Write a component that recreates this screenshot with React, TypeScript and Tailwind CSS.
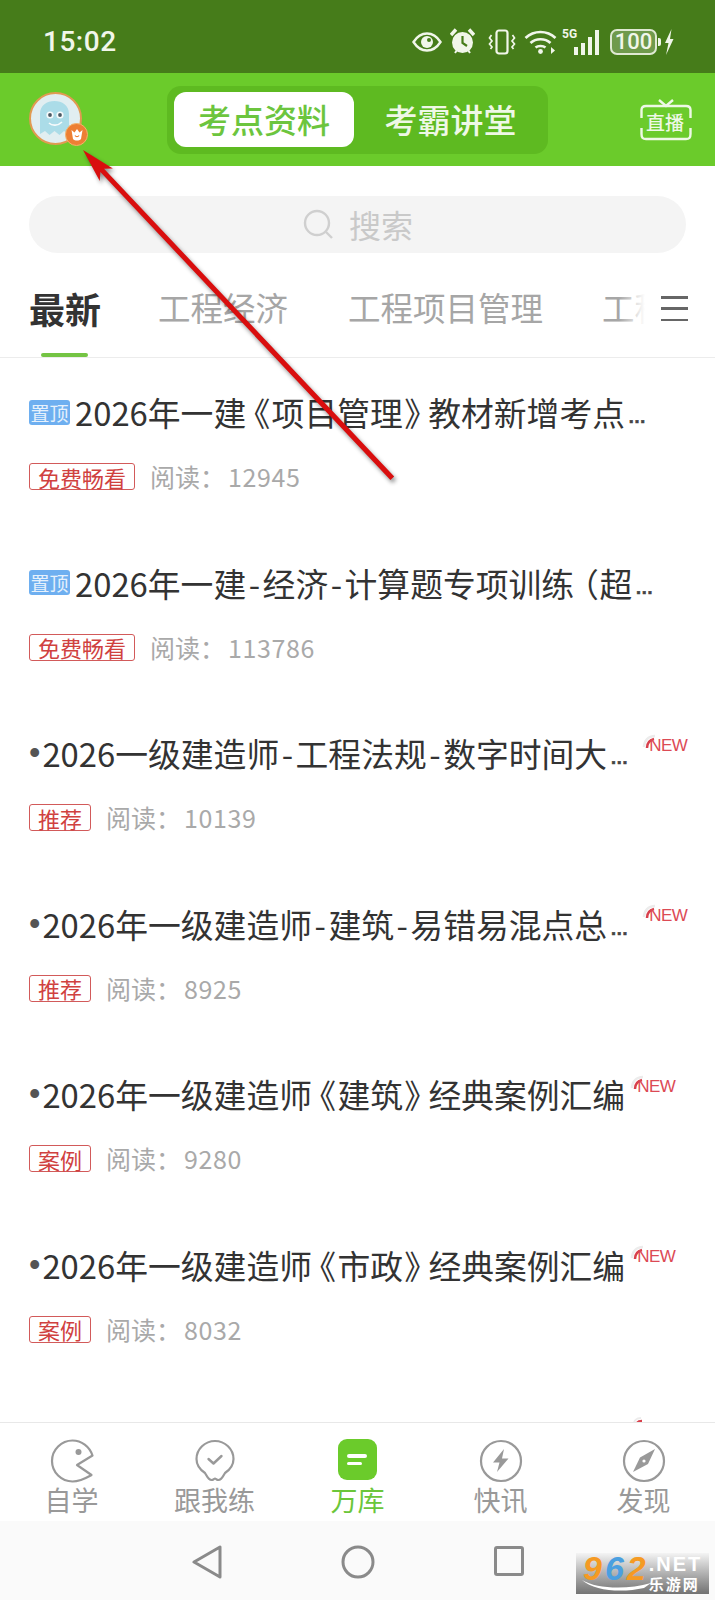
import React from "react";

type Item = { title: string; bullet?: boolean; ell?: boolean; pin?: boolean; tag: string; read: string; isNew?: boolean };

const items: Item[] = [
  { title: "2026年一建《项目管理》教材新增考点", ell: true, pin: true, tag: "免费畅看", read: "12945" },
  { title: "2026年一建-经济-计算题专项训练（超", ell: true, pin: true, tag: "免费畅看", read: "113786" },
  { title: "2026一级建造师-工程法规-数字时间大", bullet: true, ell: true, tag: "推荐", read: "10139", isNew: true },
  { title: "2026年一级建造师-建筑-易错易混点总", bullet: true, ell: true, tag: "推荐", read: "8925", isNew: true },
  { title: "2026年一级建造师《建筑》经典案例汇编", bullet: true, tag: "案例", read: "9280", isNew: true },
  { title: "2026年一级建造师《市政》经典案例汇编", bullet: true, tag: "案例", read: "8032", isNew: true },
];

function Title({ text }: { text: string }) {
  const parts = text.split(/([-《》（])/);
  return (
    <span className="whitespace-nowrap text-[32.8px] leading-[44px] text-[#333333] [font-feature-settings:'palt']">
      {parts.map((p, i) => {
        if (p === "-") return <span key={i} className="mx-[2.5px]">{p}</span>;
        if (p === "《" || p === "（") return <span key={i} className="ml-[7px] mr-[2px]">{p}</span>;
        if (p === "》") return <span key={i} className="ml-[2px] mr-[7px]">{p}</span>;
        return <span key={i}>{p}</span>;
      })}
    </span>
  );
}

function NewMark() {
  return (
    <div className="relative ml-[5px] mt-[-11px] h-[30px] w-[48px] shrink-0">
      <svg className="absolute left-0 top-0" width="16" height="20" viewBox="0 0 16 20" fill="none">
        <path d="M2 14 C2 8 6 3 13 3" stroke="#ececec" strokeWidth="2.5" />
        <path d="M5 15 C5 10 8 7 12 6" stroke="#d8404c" strokeWidth="2.5" />
      </svg>
      <span className="absolute left-[7px] top-[1px] font-['Liberation_Sans',sans-serif] text-[17px] leading-[24px] tracking-[-0.5px] text-[#dc4a55]">NEW</span>
    </div>
  );
}

function Row({ item }: { item: Item }) {
  return (
    <div className="h-[170.6px] shrink-0 pl-[29px] pt-[32px]">
      <div className="flex h-[44px] items-center">
        {item.pin && (
          <span className="mr-[5px] flex h-[25px] w-[41px] shrink-0 items-center justify-center rounded-[3px] bg-[#6eaff0] text-[19px] leading-none text-[#e6f1fc]">
            置顶
          </span>
        )}
        {item.bullet && <span className="mr-[2px] font-['Liberation_Sans',sans-serif] text-[32.5px] leading-[44px] text-[#555555]">•</span>}
        <Title text={item.title} />
        {item.ell && (
          <span className={(item.isNew ? "mr-[9px] " : "") + "ml-[3px] translate-y-[5px] font-['Liberation_Sans',sans-serif] text-[18px] font-bold leading-[44px] text-[#444444] [-webkit-text-stroke:0.6px_#444444]"}>…</span>
        )}
        {item.isNew && <NewMark />}
      </div>
      <div className="mt-[29px] flex h-[27px] items-center gap-[15px]">
        <span className="flex h-[27px] items-center rounded-[3px] border border-[#d25a5a] px-[8px] text-[22px] leading-none text-[#d0413f]">
          {item.tag}
        </span>
        <span className="flex items-center text-[25px] leading-none text-[#a9a9a9]">
          阅读：<span className="ml-[3px] tracking-[0.6px]">{item.read}</span>
        </span>
      </div>
    </div>
  );
}

const NavLabel = ({ children, active }: { children: React.ReactNode; active?: boolean }) => (
  <span className={active ? "text-[27px] leading-[34px] text-[#6bc63a]" : "text-[27px] leading-[34px] text-[#999999]"}>{children}</span>
);

export default function App() {
  return (
    <div className="relative flex h-[1600px] w-[715px] flex-col overflow-hidden bg-white font-['Noto_Sans_CJK_SC','Noto_Sans',sans-serif]">
      {/* status bar */}
      <div className="flex h-[73px] shrink-0 items-center justify-between bg-[#467c1a] pl-[43px] pr-[41px] pt-[10px] text-[#f1f6ea]">
        <span className="font-['Roboto',sans-serif] text-[28px] font-medium leading-none tracking-[0.5px]">15:02</span>
        <div className="flex items-center">
          <svg width="30" height="20" viewBox="0 0 30 20" fill="none" className="mr-[8px]">
            <path d="M1.5 10 C6 3 10 1.5 15 1.5 S24 3 28.5 10 C24 17 20 18.5 15 18.5 S6 17 1.5 10Z" stroke="currentColor" strokeWidth="2.4" />
            <circle cx="15" cy="10" r="6" fill="currentColor" />
            <circle cx="17" cy="8" r="2" fill="#467c1a" />
          </svg>
          <svg width="25" height="27" viewBox="0 0 25 27" className="mr-[13px]">
            <circle cx="12.5" cy="14.5" r="10.5" fill="currentColor" />
            <path d="M12.5 8 V15 L17 18" stroke="#467c1a" strokeWidth="2.2" fill="none" />
            <path d="M1 7 L6 1.5 M24 7 L19 1.5" stroke="currentColor" strokeWidth="3.4" />
            <path d="M5 25 L7 22 M20 25 L18 22" stroke="currentColor" strokeWidth="2" />
          </svg>
          <svg width="28" height="26" viewBox="0 0 28 26" fill="none" stroke="currentColor" className="mr-[8px]">
            <rect x="8.5" y="1.5" width="11" height="23" rx="2.5" strokeWidth="2.2" />
            <path d="M3.5 6 L1.5 9 L4 12 L1.5 15 L4 18 L2.5 20" strokeWidth="1.7" />
            <path d="M24.5 6 L26.5 9 L24 12 L26.5 15 L24 18 L25.5 20" strokeWidth="1.7" />
          </svg>
          <svg width="33" height="26" viewBox="0 0 33 26" fill="none" stroke="currentColor" strokeWidth="2.7" className="mr-[5px]">
            <path d="M1.5 9 C10 1 23 1 31.5 9" />
            <path d="M6.5 14 C12 9 21 9 26.5 14" />
            <path d="M11.5 18.5 C14 16.5 19 16.5 21.5 18.5" />
            <circle cx="16.5" cy="22.5" r="2.4" fill="currentColor" stroke="none" />
            <path d="M27 18 L31 21.5 L27 25 Z" fill="currentColor" stroke="none" />
          </svg>
          <div className="relative mr-[11px] h-[26px] w-[37px]">
            <span className="absolute left-0 top-[-2px] font-['Roboto',sans-serif] text-[12px] font-bold leading-[14px]">5G</span>
            <div className="absolute bottom-0 right-0 flex items-end gap-[3px]">
              <div className="h-[8px] w-[4px] bg-current" />
              <div className="h-[12px] w-[4px] bg-current" />
              <div className="h-[18px] w-[4px] bg-current" />
              <div className="h-[25px] w-[4px] bg-current" />
            </div>
          </div>
          <div className="mr-[1px] flex h-[26px] w-[47px] items-center justify-center rounded-[7px] border-2 border-[#dfe9d2] bg-[#6f9a4c]">
            <span className="font-['Roboto',sans-serif] text-[22px] font-medium leading-none">100</span>
          </div>
          <div className="mr-[3px] h-[8px] w-[3px] rounded-r-[2px] bg-current" />
          <svg width="10" height="26" viewBox="0 0 10 26">
            <path d="M7.5 0 L1 14 H4.5 L2 26 L9.5 10 H6 Z" fill="currentColor" />
          </svg>
        </div>
      </div>

      {/* header */}
      <div className="flex h-[93px] shrink-0 items-center bg-[#6bcb2b] pl-[29px] pr-[23px]">
        <div className="relative h-[53px] w-[53px] shrink-0 -translate-y-[1px] rounded-full border-2 border-[#e19a52] bg-[#e1eef1]">
          <svg width="49" height="49" viewBox="0 0 49 49" className="absolute left-0 top-0">
            <path d="M9 40 V20 C9 11 16 7 23.5 7 S38 11 38 20 V40 L33 37 L28.5 41 L23.5 37 L18.5 41 L14 37 Z" fill="#abdce8" />
            <circle cx="19" cy="21" r="3.6" fill="#f6fafb" />
            <circle cx="29" cy="21" r="3.6" fill="#f6fafb" />
            <circle cx="19" cy="21" r="1.9" fill="#4c5a64" />
            <circle cx="29" cy="21" r="1.9" fill="#4c5a64" />
            <path d="M18 29 C21 32 27 32 31 28" stroke="#f6fafb" strokeWidth="1.6" fill="none" />
          </svg>
          <div className="absolute left-[34px] top-[29px] flex h-[23px] w-[23px] items-center justify-center rounded-full border border-[#f4b26a] bg-[#ed7f34]">
            <svg width="14" height="14" viewBox="0 0 14 14">
              <path d="M1.5 2 L4.5 4.5 L7 1 L9.5 4.5 L12.5 2 L11 11 C9 13 5 13 3 11 Z" fill="#fff" />
              <path d="M5 7.5 C6 9 8 9 9 7.5" stroke="#ed7f34" strokeWidth="1.3" fill="none" />
            </svg>
          </div>
        </div>
        <div className="ml-[85px] flex h-[68px] w-[381px] shrink-0 items-center rounded-[14px] bg-[#5eba21] px-[7px]">
          <div className="flex h-[55px] w-[180px] items-center justify-center rounded-[12px] bg-white text-[33px] font-medium leading-none text-[#6cc53e]">
            考点资料
          </div>
          <div className="flex h-[55px] flex-1 items-center justify-center pl-[6px] text-[33px] font-medium leading-none text-[#eef8e6]">
            考霸讲堂
          </div>
        </div>
        <div className="relative ml-auto h-[42px] w-[52px] shrink-0 text-[#eef8e6]">
          <svg width="52" height="42" viewBox="0 0 52 42" fill="none" stroke="currentColor" strokeWidth="2.4" className="absolute left-0 top-0">
            <path d="M1.5 19 V11 C1.5 8 3 7 6 7 H46 C49 7 50.5 8 50.5 11 V19" />
            <path d="M1.5 29 V35 C1.5 39 3 40 6 40 H46 C49 40 50.5 39 50.5 35 V29" />
            <path d="M19 1 L26 7 L33 1" />
          </svg>
          <span className="absolute left-[6px] top-[11px] text-[19px] font-medium leading-[23px]">直播</span>
        </div>
      </div>

      {/* search */}
      <div className="mx-[29px] mt-[30px] flex h-[57px] shrink-0 items-center justify-center gap-[15px] rounded-full bg-[#f4f4f4]">
        <svg width="32" height="32" viewBox="0 0 32 32" fill="none" stroke="#cfcfcf" strokeWidth="2.4">
          <circle cx="15" cy="14" r="12" />
          <path d="M24 23 L30 29" />
        </svg>
        <span className="-translate-y-[1px] text-[32px] leading-none text-[#c9c9c9]">搜索</span>
      </div>

      {/* tabs */}
      <div className="relative flex h-[105px] shrink-0 border-b border-[#ececec]">
        <div className="relative flex w-[645px] items-center overflow-hidden pl-[29px] pt-[5px]">
          <span className="mr-[57px] shrink-0 text-[36px] font-bold leading-none text-[#333333]">最新</span>
          <span className="mr-[60px] shrink-0 text-[32.5px] leading-none text-[#a6a6a6]">工程经济</span>
          <span className="mr-[59px] shrink-0 text-[32.5px] leading-none text-[#a6a6a6]">工程项目管理</span>
          <span className="shrink-0 text-[32.5px] leading-none text-[#a6a6a6]">工程法规</span>
          <div className="absolute right-0 top-0 h-full w-[26px] bg-gradient-to-r from-transparent to-white" />
        </div>
        <div className="absolute left-[41px] top-[100px] h-[4px] w-[47px] rounded-full bg-[#74c443]" />
        <div className="ml-[16px] mt-[43px] flex h-[25px] w-[27px] flex-col justify-between">
          <div className="h-[2.5px] bg-[#666666]" />
          <div className="h-[2.5px] bg-[#666666]" />
          <div className="h-[2.5px] bg-[#666666]" />
        </div>
      </div>

      {/* list */}
      <div className="relative flex min-h-0 flex-1 flex-col overflow-hidden">
        {items.map((it) => (
          <Row key={it.read} item={it} />
        ))}
        <svg className="absolute bottom-[-2px] left-[632px]" width="16" height="8" viewBox="0 0 16 8" fill="none">
          <path d="M2 8 C2 5 4 2 9 2" stroke="#ececec" strokeWidth="2" />
          <path d="M5 7 C6 5.5 8 5 10 5" stroke="#d8404c" strokeWidth="2.5" />
        </svg>
      </div>

      {/* bottom nav */}
      <div className="grid h-[99px] shrink-0 grid-cols-5 border-t border-[#e8e8e8] bg-white pt-[16px]">
        <div className="flex flex-col items-center">
          <svg width="44" height="44" viewBox="0 0 44 44" fill="none" stroke="#999" strokeWidth="2.2">
            <path d="M42.5 16.5 C39.5 7.5 31.5 1.5 22.5 1.5 C11.5 1.5 2 10.5 2 22 S11.5 42.5 22.5 42.5 C30 42.5 37 38.5 41.5 36 L27 26 Z" strokeLinejoin="round" />
            <circle cx="28.5" cy="13" r="3" fill="#999" stroke="none" />
          </svg>
          <NavLabel>自学</NavLabel>
        </div>
        <div className="flex flex-col items-center">
          <svg width="44" height="44" viewBox="0 0 44 44" fill="none" stroke="#999" strokeWidth="2.2">
            <path d="M22 2 C12 2 3.5 10 3.5 20 C3.5 26.5 7.5 31 12 34 C14 37 15 41 18.5 41 C20.5 41 21 39.5 22 39.5 S23.5 41 25.5 41 C29 41 30 37 32 34 C36.5 31 40.5 26.5 40.5 20 C40.5 10 32 2 22 2 Z" />
            <path d="M15.5 20 L20.5 24.5 L28.5 17" strokeLinecap="round" strokeLinejoin="round" strokeWidth="2.4" />
          </svg>
          <NavLabel>跟我练</NavLabel>
        </div>
        <div className="flex flex-col items-center">
          <div className="mb-[3px] flex h-[41px] w-[39px] flex-col justify-center gap-[4px] rounded-[9px] bg-[#6bcb2b] pl-[9px]">
            <div className="h-[3.5px] w-[20px] rounded-full bg-white" />
            <div className="h-[3.5px] w-[15px] rounded-full bg-white" />
          </div>
          <NavLabel active>万库</NavLabel>
        </div>
        <div className="flex flex-col items-center">
          <svg width="44" height="44" viewBox="0 0 44 44" fill="none" stroke="#999" strokeWidth="2.2">
            <circle cx="22" cy="22" r="20" />
            <path d="M25 10 L14 23.5 H20.5 L18 33 L29.5 19.5 H23 Z" fill="#999" stroke="none" />
          </svg>
          <NavLabel>快讯</NavLabel>
        </div>
        <div className="flex flex-col items-center">
          <svg width="44" height="44" viewBox="0 0 44 44" fill="none" stroke="#999" strokeWidth="2.2">
            <circle cx="22" cy="22" r="20" />
            <path d="M33 10 L18 18.5 L11 33 L26 25 Z" fill="#999" stroke="none" />
            <circle cx="22" cy="22" r="1.6" fill="#fff" stroke="none" />
          </svg>
          <NavLabel>发现</NavLabel>
        </div>
      </div>

      {/* system bar */}
      <div className="relative flex h-[79px] shrink-0 items-start justify-center gap-[119px] bg-[#fafafa] pt-[24px]">
        <svg width="30" height="34" viewBox="0 0 30 34" fill="none" stroke="#8a8a8a" strokeWidth="3" strokeLinejoin="round">
          <path d="M28 2 V32 L2 17 Z" />
        </svg>
        <svg width="34" height="34" viewBox="0 0 34 34" fill="none" stroke="#8a8a8a" strokeWidth="3">
          <circle cx="17" cy="17" r="15" />
        </svg>
        <svg width="30" height="34" viewBox="0 0 30 34" fill="none" stroke="#8a8a8a" strokeWidth="3" strokeLinejoin="round">
          <rect x="1.5" y="2.5" width="27" height="27" rx="1.5" />
        </svg>
        {/* watermark */}
        <div className="absolute left-[576px] top-[32px] flex h-[41px] w-[133px] items-start bg-gradient-to-b from-[#f4f4f4] to-[#737373] pl-[7px]">
          <span className="font-['Liberation_Sans',sans-serif] text-[34px] font-bold italic leading-[30px] tracking-[3px]">
            <span className="text-[#f59a23]">9</span>
            <span className="text-[#4a9fe0]">6</span>
            <span className="text-[#f59a23]">2</span>
          </span>
          <div className="flex flex-col items-start">
            <span className="font-['Liberation_Sans',sans-serif] text-[20px] font-bold leading-[22px] tracking-[2px] text-white">.NET</span>
            <span className="text-[15px] font-bold leading-[18px] tracking-[2px] text-white">乐游网</span>
          </div>
          <svg className="absolute left-[6px] top-[26px]" width="70" height="13" viewBox="0 0 70 13">
            <path d="M0 1 C15 10 45 11 69 4 L62 9 C40 14 12 12 0 1 Z" fill="#ffffff" />
          </svg>
        </div>
      </div>

      {/* annotation arrow */}
      <svg width="715" height="600" viewBox="0 0 715 600" className="pointer-events-none absolute left-0 top-0 drop-shadow-[2px_3px_2px_rgba(0,0,0,0.45)]">
        <g transform="translate(83 150) rotate(46.7)">
          <path d="M0 0 L34 -9 L28 -2.5 L451 -2.6 L451 2.6 L28 2.5 L34 9 Z" fill="#d90e0e" />
        </g>
      </svg>
    </div>
  );
}
